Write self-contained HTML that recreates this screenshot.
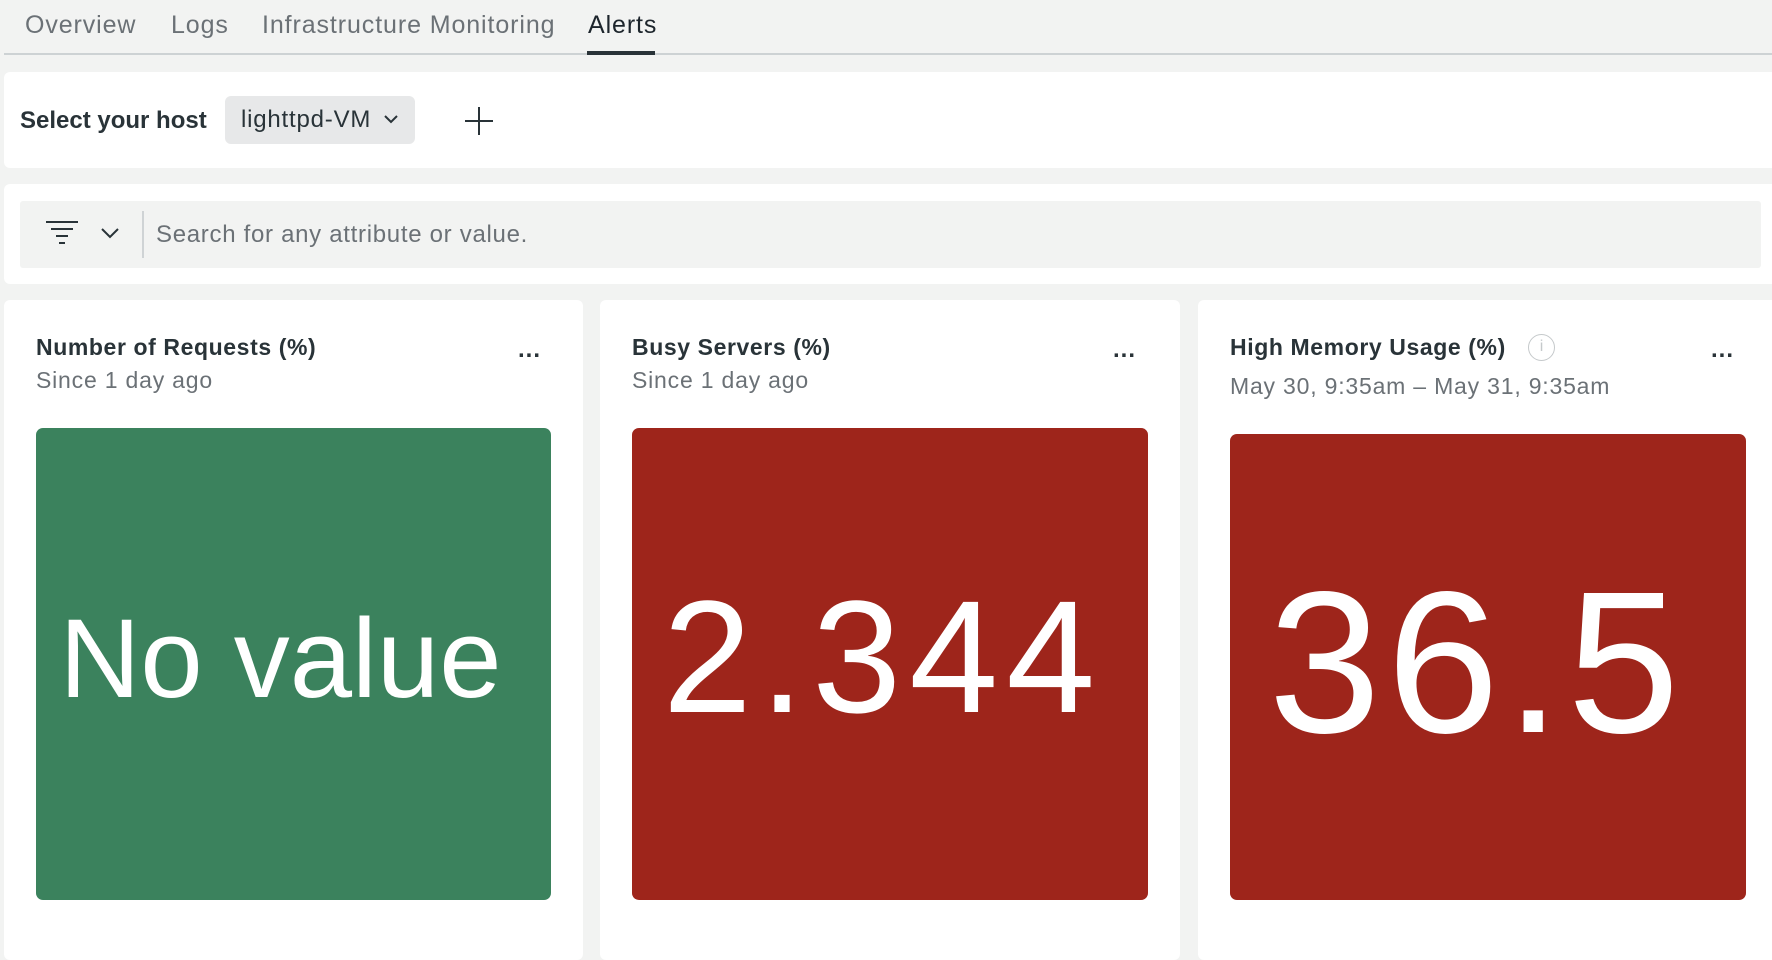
<!DOCTYPE html>
<html><head><meta charset="utf-8"><style>
*{margin:0;padding:0;box-sizing:border-box}
body{width:1772px;height:932px;background:#f2f3f2;font-family:"Liberation Sans",sans-serif;position:relative;overflow:hidden;color:#1d252c}
.a{position:absolute}
.tab{position:absolute;top:10px;font-size:25px;color:#6b7176;line-height:30px;letter-spacing:0.9px}
.panel{position:absolute;background:#fff;border-radius:6px}
.card{position:absolute;top:300px;height:660px;background:#fff;border-radius:6px}
.title{position:absolute;font-size:23px;font-weight:bold;color:#293338;line-height:28px;white-space:nowrap;letter-spacing:0.6px}
.sub{position:absolute;font-size:23px;color:#6b7176;line-height:28px;white-space:nowrap;letter-spacing:0.8px}
.dots{position:absolute;font-size:24px;font-weight:bold;color:#293338;letter-spacing:1px}
.tile{position:absolute;border-radius:7px;color:#fff;display:flex;align-items:center;justify-content:center;line-height:1}
</style></head><body>
<div class="tab" style="left:25px">Overview</div>
<div class="tab" style="left:171px">Logs</div>
<div class="tab" style="left:262px">Infrastructure Monitoring</div>
<div class="tab" style="left:588px;color:#1d252c">Alerts</div>
<div class="a" style="left:4px;top:53px;width:1768px;height:2px;background:#cdd2d4"></div>
<div class="a" style="left:587px;top:51px;width:68px;height:4px;background:#293338"></div>

<div class="panel" style="left:4px;top:72px;width:1780px;height:96px"></div>
<div class="a" style="left:20px;top:107px;font-size:24px;font-weight:bold;color:#293338">Select your host</div>
<div class="a" style="left:225px;top:96px;width:190px;height:48px;background:#e7e8e9;border-radius:6px"></div>
<div class="a" style="left:241px;top:106px;font-size:24px;color:#293338;letter-spacing:0.8px">lighttpd-VM</div>
<svg class="a" style="left:383px;top:113px" width="16" height="12"><path d="M2 3l6 6 6-6" stroke="#293338" stroke-width="2" fill="none"/></svg>
<svg class="a" style="left:464px;top:106px" width="30" height="30"><path d="M15 1v28M1 15h28" stroke="#293338" stroke-width="2"/></svg>

<div class="panel" style="left:4px;top:184px;width:1780px;height:100px"></div>
<div class="a" style="left:20px;top:201px;width:1741px;height:67px;background:#f2f3f2;border-radius:3px"></div>
<svg class="a" style="left:45px;top:220px" width="34" height="24"><path d="M1 2h32M6 9h22M11 16h12M14 23h6" stroke="#293338" stroke-width="2"/></svg>
<svg class="a" style="left:100px;top:226px" width="20" height="14"><path d="M2 3l8 8 8-8" stroke="#293338" stroke-width="2" fill="none"/></svg>
<div class="a" style="left:142px;top:211px;width:2px;height:47px;background:#cfd3d5"></div>
<div class="a" style="left:156px;top:221px;font-size:24px;color:#6b7176;letter-spacing:0.7px">Search for any attribute or value.</div>

<div class="card" style="left:4px;width:579px"></div>
<div class="card" style="left:600px;width:580px"></div>
<div class="card" style="left:1198px;width:600px"></div>

<div class="title" style="left:36px;top:333px">Number of Requests (%)</div>
<div class="sub" style="left:36px;top:366px">Since 1 day ago</div>
<div class="dots" style="left:518px;top:336px">...</div>
<div class="tile" style="left:36px;top:428px;width:515px;height:472px;background:#3b825d;font-size:112px;padding-bottom:10px;padding-right:26px">No value</div>

<div class="title" style="left:632px;top:333px">Busy Servers (%)</div>
<div class="sub" style="left:632px;top:366px">Since 1 day ago</div>
<div class="dots" style="left:1113px;top:336px">...</div>
<div class="tile" style="left:632px;top:428px;width:516px;height:472px;background:#9e251b;font-size:160px;padding-bottom:14px;padding-right:14px;letter-spacing:8px">2.344</div>

<div class="title" style="left:1230px;top:333px">High Memory Usage (%)</div>
<div class="a" style="left:1528px;top:334px;width:27px;height:27px;border:1.5px solid #c5c9cb;border-radius:50%;color:#c5c9cb;font-size:16px;text-align:center;line-height:24px">i</div>
<div class="sub" style="left:1230px;top:372px">May 30, 9:35am – May 31, 9:35am</div>
<div class="dots" style="left:1711px;top:336px">...</div>
<div class="tile" style="left:1230px;top:434px;width:516px;height:466px;background:#9e251b;font-size:202px;padding-bottom:10px;padding-right:22px;letter-spacing:6px">36.5</div>
</body></html>
